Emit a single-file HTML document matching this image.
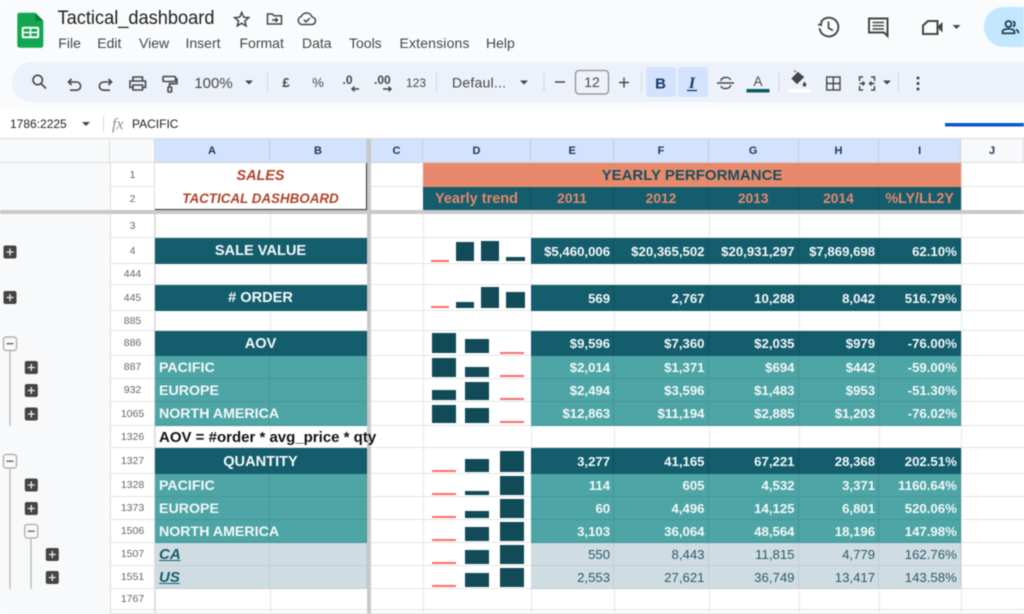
<!DOCTYPE html>
<html lang="en"><head><meta charset="utf-8"><title>Tactical_dashboard</title>
<style>
html,body{margin:0;padding:0;background:#fff}
#p{position:relative;width:1024px;height:614px;overflow:hidden;font-family:"Liberation Sans",sans-serif;background:#fff;filter:blur(.5px)}
#p svg{position:absolute;left:0;top:0;z-index:3}
.tb{background:#f9fbfd;position:absolute;left:0;top:0;width:1024px;height:110px}
.gut{position:absolute;left:0;top:163px;width:109.5px;height:451px;background:#f8f9fa;z-index:1}
.vl{position:absolute;top:139px;height:475px;width:1px;background:#e4e5e5}
.r{position:absolute;left:0;width:1024px;border-bottom:1px solid #e2e3e3;box-sizing:border-box}
.n{position:absolute;left:110px;width:45px;top:0;bottom:0;display:flex;align-items:center;justify-content:center;font-size:10.5px;color:#666;background:#fff;border-left:1px solid #dcdcdc;border-right:1px solid #dcdcdc;box-sizing:border-box}
.c{position:absolute;top:0;bottom:-1px;display:flex;align-items:center;justify-content:flex-end;padding-right:3.2px;box-sizing:border-box;font-size:13.2px;font-weight:bold;color:#f4f8f8;white-space:nowrap}
.ab,.a,.b{justify-content:flex-start;padding:0 0 0 4px;font-size:14.2px}
.ab{left:155px;width:212px;justify-content:center;padding:0;font-size:14.6px}
.a{left:155px;width:115px;z-index:1;padding-top:1px}.b{left:270px;width:97px}
.e{left:531px;width:83.3px}.f{left:614.3px;width:94.4px}.g{left:708.7px;width:90px}.h{left:798.7px;width:80.6px}.i{left:879.3px;width:81.7px}
.dk .c,.dk.c{background:#135d6d;border-right:1px solid #11525f}
.t .c,.t.c{background:#4ea5a6;border-right:1px solid #469698;border-bottom:1px solid #469698}
.l .c,.l.c{background:#cfdde3;border-right:1px solid #bfcfd6;border-bottom:1px solid #bfcfd6;color:#2d5a66;font-weight:normal}
.yr{justify-content:center;padding:0 0 1px 0;font-size:13.8px;color:#e8876b}
.hd{position:absolute;top:139px;height:24px;background:#d3e3fd;border-right:1px solid #c4cfdf;box-sizing:border-box;display:flex;align-items:center;justify-content:center;font-size:11px;font-weight:bold;color:#1c3557;border-bottom:1px solid #d0d0d0}
.bar{position:absolute;background:#114b57}
.red{position:absolute;background:#ff6b6b;height:2px}
.fz{position:absolute;background:#c9c9c9;z-index:2}
.line{position:absolute;background:#dadada}
</style></head><body><div id="p">
<div class="tb"></div>

<div class="vl" style="left:155px"></div><div class="vl" style="left:270px"></div><div class="vl" style="left:423px"></div><div class="vl" style="left:531px"></div><div class="vl" style="left:614px"></div><div class="vl" style="left:709px"></div><div class="vl" style="left:799px"></div><div class="vl" style="left:879px"></div><div class="vl" style="left:961px"></div>

<div class="line" style="left:0;top:138px;width:1024px;height:1px"></div>
<div class="hd" style="left:0;width:110px;background:#f8f9fa;border-color:#dcdcdc"></div>
<div class="hd" style="left:110px;width:45px;background:#f8f9fa;border-color:#dcdcdc"></div>
<div class="hd" style="left:155px;width:115px">A</div>
<div class="hd" style="left:270px;width:97px">B</div>
<div class="hd" style="left:371px;width:52px">C</div>
<div class="hd" style="left:423px;width:108px">D</div>
<div class="hd" style="left:531px;width:83.3px">E</div>
<div class="hd" style="left:614.3px;width:94.4px">F</div>
<div class="hd" style="left:708.7px;width:90px">G</div>
<div class="hd" style="left:798.7px;width:80.6px">H</div>
<div class="hd" style="left:879.3px;width:81.7px">I</div>
<div class="hd" style="left:961px;width:63px;background:#f8f9fa;border-color:#dcdcdc">J</div>

<div class="r" style="top:163px;height:24px"><span class="n">1</span>
<span class="c" style="left:155px;width:211px;background:#fff;justify-content:center;padding:2px 0 0 0;font-style:italic;font-size:14.4px;color:#b0432b">SALES</span>
<span class="c" style="left:423px;width:538px;background:#e8896c;justify-content:center;padding:0;font-size:15px;color:#174f5c">YEARLY PERFORMANCE</span></div>
<div class="r" style="top:187px;height:23px;border:0"><span class="n">2</span>
<span class="c" style="left:155px;width:211px;background:#fff;justify-content:center;padding:0 0 1px 0;font-style:italic;font-size:13.4px;color:#b0432b">TACTICAL DASHBOARD</span>
<span class="c dk yr" style="left:423px;width:108px;font-size:14.5px">Yearly trend</span>
<span class="c e dk yr">2011</span>
<span class="c f dk yr">2012</span>
<span class="c g dk yr">2013</span>
<span class="c h dk yr">2014</span>
<span class="c i dk yr" style="font-size:14.3px">%LY/LL2Y</span></div>
<div style="position:absolute;left:366px;top:163px;width:1px;height:47px;background:#333"></div>
<div style="position:absolute;left:155px;top:209px;width:212px;height:1px;background:#333"></div>

<div class="r" style="top:214px;height:24px"><span class="n">3</span></div>

<div class="r" style="top:238px;height:26px"><span class="n">4</span>
<span class="c ab dk">SALE VALUE</span><span class="c e dk">$5,460,006</span><span class="c f dk">$20,365,502</span><span class="c g dk">$20,931,297</span><span class="c h dk">$7,869,698</span><span class="c i dk">62.10%</span></div>
<div class="r" style="top:264px;height:21px"><span class="n">444</span></div>
<div class="r" style="top:285px;height:26px"><span class="n">445</span>
<span class="c ab dk"># ORDER</span><span class="c e dk">569</span><span class="c f dk">2,767</span><span class="c g dk">10,288</span><span class="c h dk">8,042</span><span class="c i dk">516.79%</span></div>
<div class="r" style="top:311px;height:20px"><span class="n">885</span></div>
<div class="r" style="top:331px;height:25px"><span class="n">886</span>
<span class="c ab dk">AOV</span><span class="c e dk">$9,596</span><span class="c f dk">$7,360</span><span class="c g dk">$2,035</span><span class="c h dk">$979</span><span class="c i dk">-76.00%</span></div>
<div class="r t" style="top:356px;height:23px"><span class="n">887</span>
<span class="c a">PACIFIC</span><span class="c b"></span><span class="c e">$2,014</span><span class="c f">$1,371</span><span class="c g">$694</span><span class="c h">$442</span><span class="c i">-59.00%</span></div>
<div class="r t" style="top:379px;height:23px"><span class="n">932</span>
<span class="c a">EUROPE</span><span class="c b"></span><span class="c e">$2,494</span><span class="c f">$3,596</span><span class="c g">$1,483</span><span class="c h">$953</span><span class="c i">-51.30%</span></div>
<div class="r t" style="top:402px;height:24px"><span class="n">1065</span>
<span class="c a">NORTH AMERICA</span><span class="c b"></span><span class="c e">$12,863</span><span class="c f">$11,194</span><span class="c g">$2,885</span><span class="c h">$1,203</span><span class="c i">-76.02%</span></div>
<div class="r" style="top:426px;height:22px"><span class="n">1326</span></div>
<div class="r" style="top:448px;height:26px"><span class="n">1327</span>
<span class="c ab dk" style="padding-top:2px">QUANTITY</span><span class="c e dk">3,277</span><span class="c f dk">41,165</span><span class="c g dk">67,221</span><span class="c h dk">28,368</span><span class="c i dk">202.51%</span></div>
<div class="r t" style="top:474px;height:23px"><span class="n">1328</span>
<span class="c a">PACIFIC</span><span class="c b"></span><span class="c e">114</span><span class="c f">605</span><span class="c g">4,532</span><span class="c h">3,371</span><span class="c i">1160.64%</span></div>
<div class="r t" style="top:497px;height:23px"><span class="n">1373</span>
<span class="c a">EUROPE</span><span class="c b"></span><span class="c e">60</span><span class="c f">4,496</span><span class="c g">14,125</span><span class="c h">6,801</span><span class="c i">520.06%</span></div>
<div class="r t" style="top:520px;height:23px"><span class="n">1506</span>
<span class="c a">NORTH AMERICA</span><span class="c b"></span><span class="c e">3,103</span><span class="c f">36,064</span><span class="c g">48,564</span><span class="c h">18,196</span><span class="c i">147.98%</span></div>
<div class="r l" style="top:543px;height:23px"><span class="n">1507</span>
<span class="c a" style="font-weight:bold;font-style:italic;font-size:15px;color:#135d6d;text-decoration:underline">CA</span><span class="c b"></span><span class="c e">550</span><span class="c f">8,443</span><span class="c g">11,815</span><span class="c h">4,779</span><span class="c i">162.76%</span></div>
<div class="r l" style="top:566px;height:23px"><span class="n">1551</span>
<span class="c a" style="font-weight:bold;font-style:italic;font-size:15px;color:#135d6d;text-decoration:underline">US</span><span class="c b"></span><span class="c e">2,553</span><span class="c f">27,621</span><span class="c g">36,749</span><span class="c h">13,417</span><span class="c i">143.58%</span></div>
<div class="r" style="top:589px;height:21px"><span class="n">1767</span></div>
<div class="r" style="top:610px;height:4px"><span class="n"></span></div>

<div class="gut"></div>
<div class="fz" style="left:367px;top:139px;width:4px;height:475px"></div>
<div class="fz" style="left:0;top:210px;width:1024px;height:4px"></div>
<div style="position:absolute;z-index:2;left:159px;top:427px;height:22px;line-height:22px;font-size:15px;font-weight:bold;color:#111;white-space:nowrap">AOV = #order * avg_price * qty</div>

<div class="red" style="left:430.5px;top:260px;width:18px"></div><div class="bar" style="left:456px;top:242px;width:18px;height:19px"></div><div class="bar" style="left:481px;top:241px;width:18px;height:20px"></div><div class="bar" style="left:506px;top:257px;width:18.5px;height:4px"></div>
<div class="red" style="left:430.5px;top:306px;width:18px"></div><div class="bar" style="left:456px;top:302px;width:18px;height:5.5px"></div><div class="bar" style="left:481px;top:287px;width:18px;height:20.5px"></div><div class="bar" style="left:506px;top:292px;width:18.5px;height:15.5px"></div>

<div class="bar" style="left:431.5px;top:333px;width:24px;height:20px"></div><div class="bar" style="left:465px;top:339px;width:24px;height:14px"></div><div class="red" style="left:499.5px;top:352px;width:24px"></div>
<div class="bar" style="left:431.5px;top:358px;width:24px;height:19px"></div><div class="bar" style="left:465px;top:367px;width:24px;height:10px"></div><div class="red" style="left:499.5px;top:375px;width:24px"></div>
<div class="bar" style="left:431.5px;top:390px;width:24px;height:10px"></div><div class="bar" style="left:465px;top:382px;width:24px;height:18px"></div><div class="red" style="left:499.5px;top:398px;width:24px"></div>
<div class="bar" style="left:431.5px;top:405px;width:24px;height:18px"></div><div class="bar" style="left:465px;top:408px;width:24px;height:15px"></div><div class="red" style="left:499.5px;top:421px;width:24px"></div>

<div class="red" style="left:431.5px;top:470px;width:24px"></div><div class="bar" style="left:465px;top:459px;width:24px;height:12.5px"></div><div class="bar" style="left:499.5px;top:451px;width:24px;height:20.5px"></div>
<div class="red" style="left:431.5px;top:493px;width:24px"></div><div class="bar" style="left:465px;top:491px;width:24px;height:3.5px"></div><div class="bar" style="left:499.5px;top:476px;width:24px;height:18.5px"></div>
<div class="red" style="left:431.5px;top:516px;width:24px"></div><div class="bar" style="left:465px;top:511px;width:24px;height:6.5px"></div><div class="bar" style="left:499.5px;top:499px;width:24px;height:18.5px"></div>
<div class="red" style="left:431.5px;top:539px;width:24px"></div><div class="bar" style="left:465px;top:527px;width:24px;height:13.5px"></div><div class="bar" style="left:499.5px;top:522px;width:24px;height:18.5px"></div>
<div class="red" style="left:431.5px;top:562px;width:24px"></div><div class="bar" style="left:465px;top:550px;width:24px;height:13.5px"></div><div class="bar" style="left:499.5px;top:545px;width:24px;height:18.5px"></div>
<div class="red" style="left:431.5px;top:585px;width:24px"></div><div class="bar" style="left:465px;top:573px;width:24px;height:13.5px"></div><div class="bar" style="left:499.5px;top:568px;width:24px;height:18.5px"></div>

<svg width="1024" height="614" viewBox="0 0 1024 614" font-family="'Liberation Sans',sans-serif">
<path d="M32 62H1024V102H32a20 20 0 0 1 0-40z" fill="#edf2fa"/>
<rect x="0" y="110" width="1024" height="28" fill="#fff"/>

<path d="M19.5 12.7H35.3L43.3 20.7V45.5a2.2 2.2 0 0 1-2.2 2.2H19.5a2.2 2.2 0 0 1-2.2-2.2V14.9a2.2 2.2 0 0 1 2.2-2.2z" fill="#12a650"/>
<path d="M35.3 12.7L43.3 20.7H35.3z" fill="#0b7f3a"/>
<rect x="22.7" y="27.7" width="15.5" height="9.6" rx="1" fill="none" stroke="#fff" stroke-width="2"/>
<path d="M22.5 32.5H38.5M30.5 27.5V37.5" stroke="#fff" stroke-width="1.6"/>

<text x="57.5" y="24" font-size="19" fill="#1f1f1f" textLength="157" lengthAdjust="spacingAndGlyphs">Tactical_dashboard</text>
<g font-size="14" fill="#444746">
<text x="58.3" y="48">File</text><text x="97.3" y="48">Edit</text><text x="139" y="48">View</text><text x="185.5" y="48">Insert</text><text x="239.5" y="48">Format</text><text x="302" y="48">Data</text><text x="349" y="48">Tools</text><text x="399.5" y="48" textLength="70">Extensions</text><text x="486" y="48">Help</text>
</g>

<g fill="none" stroke="#444746" stroke-width="1.5">
<path d="M241.7 12.5l2 4.7 5.1.4-3.9 3.3 1.2 5-4.4-2.7-4.4 2.7 1.2-5-3.9-3.3 5.1-.4z"/>
<path d="M267.5 14h5l1.5 1.8h7.5v8.2h-14z"/>
<path d="M272 20h5.5M275.5 18l2 2-2 2"/>
<path d="M302 24.5h9.5a3.7 3.7 0 0 0 .6-7.4 5.8 5.8 0 0 0-10.9-.6 4.1 4.1 0 0 0 .8 8z"/>
<path d="M303.8 19.8l2.2 2 3.8-3.6"/>
</g>

<g fill="none" stroke="#444746" stroke-width="1.6">
<circle cx="37.7" cy="80" r="4.7"/><path d="M41 83.5l5 5"/>
<path d="M71.5 79l-3 3 3 3M69 82h7.5a4.1 4.1 0 0 1 0 8.2H70"/>
<path d="M108.5 79l3 3-3 3M111 82h-7.5a4.1 4.1 0 0 0 0 8.2h6.5"/>
<path d="M133 81v-4h9.5v4M133 87.5h-3v-6.5h15.5v6.5h-3M133 85h9.5v5H133z"/>
<rect x="163" y="76.5" width="12.5" height="5" rx="1"/><path d="M175.5 79h1.5v4.7h-7.5V87"/><rect x="168" y="87" width="3.6" height="5" rx=".8"/>
</g>

<g fill="#444746">
<text x="213.5" y="88" font-size="15" text-anchor="middle">100%</text>
<path d="M245 80.5h8l-4 4z"/>
<text x="286" y="87" font-size="13" text-anchor="middle" font-weight="bold">£</text>
<text x="318" y="87" font-size="13" text-anchor="middle">%</text>
<text x="342.5" y="84" font-size="12" font-weight="bold">.0</text>
<text x="374" y="84" font-size="12" font-weight="bold">.00</text>
<text x="416" y="87" font-size="12" text-anchor="middle">123</text>
<text x="452" y="87.5" font-size="14" textLength="54">Defaul...</text>
<path d="M520 80.5h8l-4 4z"/>
<text x="592" y="87" font-size="14" text-anchor="middle">12</text>
<path d="M883 80.5h8l-4 4z"/>
<circle cx="918" cy="78" r="1.5"/><circle cx="918" cy="83.5" r="1.5"/><circle cx="918" cy="89" r="1.5"/>
<path d="M952.5 25h8l-4 4z"/>
</g>
<g fill="none" stroke="#444746" stroke-width="1.4">
<path d="M359 89h-7M354.5 86.7l-2.5 2.3 2.5 2.3"/>
<path d="M383 89h8M388.5 86.7l2.5 2.3-2.5 2.3"/>
<path d="M555 82h10M619 82.5h10M624 77.5v10"/>
</g>
<rect x="575.5" y="70.5" width="33" height="23.5" rx="3.5" fill="none" stroke="#8f8f8f" stroke-width="1.3"/>

<g fill="#d6d9dd">
<rect x="267" y="72" width="1" height="20"/><rect x="436" y="72" width="1" height="20"/><rect x="543.5" y="72" width="1" height="20"/><rect x="641" y="72" width="1" height="20"/><rect x="778.5" y="72" width="1" height="20"/><rect x="898" y="72" width="1" height="20"/>
</g>
<rect x="646" y="67" width="30" height="30" rx="3" fill="#d3e3fd"/>
<rect x="678" y="67" width="30" height="30" rx="3" fill="#d3e3fd"/>
<text x="660.5" y="88.5" font-size="15" font-weight="bold" text-anchor="middle" fill="#173a63">B</text>
<text x="692" y="88" font-family="'Liberation Serif',serif" font-size="16" font-weight="bold" font-style="italic" text-anchor="middle" fill="#173a63">I</text>
<path d="M687 90.5h10" stroke="#173a63" stroke-width="1.3"/>
<g fill="none" stroke="#444746" stroke-width="1.4">
<path d="M717 83h17M721 81c-.5-4 8.5-5 9.5-1M730.5 85c.5 4-8.5 5-9.5 1"/>
<rect x="826.7" y="77" width="13.3" height="13"/><path d="M833.3 77v13M826.7 83.5H840"/>
<path d="M863 77h-3.5v4M863 90h-3.5v-4M871 77h3.5v4M871 90h3.5v-4M859.5 83.5h5M862.5 81.5l2 2-2 2M874.5 83.5h-5M871.5 81.5l-2 2 2 2"/>
</g>
<text x="758" y="86" font-size="13.5" text-anchor="middle" fill="#444746">A</text>
<rect x="746.5" y="89" width="23" height="3.5" fill="#0f5a60"/>
<path d="M798 72.5l-6 6 5 5 6.5-6.5zM796 72l-2-1.500" fill="#444746" stroke="#444746" stroke-width="1"/>
<path d="M804.5 81.5c1 1.5 1.800 2.300 1.800 3.200a1.800 1.800 0 0 1-3.600 0c0-.9.800-1.700 1.800-3.200z" fill="#444746"/>
<rect x="788" y="89" width="23" height="3.5" fill="#fff"/>

<rect x="984" y="7" width="70" height="40" rx="20" fill="#c2e7ff"/>
<g fill="none" stroke="#444746" stroke-width="2">
<path d="M821 22a9.400 9.400 0 1 1-1.400 6.200M818 24.500l3 .5 .5-3.500" stroke-width="1.900"/>
<path d="M828.500 21.500v6.500l4.500 2.500" stroke-width="1.700"/>
<path d="M869 18.500h18.500v17.500l-3.500-3.500H869z"/>
<path d="M872.500 22.500h11.500M872.500 25.700h11.500M872.500 29h11.500" stroke-width="1.400"/>
<path d="M928 21h9.500v13H923v-8.500z"/>
</g>
<path d="M937 27l5.500-5v10.500z" fill="#444746"/>
<g fill="none" stroke="#1f3a4d" stroke-width="1.700">
<circle cx="1008.500" cy="24" r="3"/>
<path d="M1002.500 33.300v-1.500c0-2 3-3 6-3s6 1 6 3v1.500z"/>
<path d="M1013 21.200a3 3 0 0 1 0 5.500M1016 29.500c1.300.6 2.300 1.500 2.300 3v.8"/>
</g>

<text x="10" y="128" font-size="12" fill="#1f1f1f">1786:2225</text>
<path d="M82 122h8l-4 4z" fill="#444746"/>
<rect x="103" y="116" width="1" height="16" fill="#d9d9d9"/>
<text x="112" y="129" font-family="'Liberation Serif',serif" font-style="italic" font-size="16" fill="#8c8c8c">fx</text>
<text x="132" y="128" font-size="12" fill="#1f1f1f">PACIFIC</text>
<rect x="945" y="123" width="79" height="3.5" fill="#0b57d0"/>

<path d="M10 350V426M10 468V589M31 538V589" stroke="#b5b5b5" stroke-width="1.300" fill="none"/>
<g fill="#444">
<rect x="3.5" y="245.500" width="13" height="13" rx="2"/><rect x="3.5" y="291" width="13" height="13" rx="2"/>
<rect x="24.800" y="361" width="13" height="13" rx="2"/><rect x="24.800" y="384" width="13" height="13" rx="2"/><rect x="24.800" y="407.500" width="13" height="13" rx="2"/>
<rect x="24.800" y="478.500" width="13" height="13" rx="2"/><rect x="24.800" y="502" width="13" height="13" rx="2"/>
<rect x="45.800" y="548" width="13" height="13" rx="2"/><rect x="45.800" y="571" width="13" height="13" rx="2"/>
</g>
<path d="M6.500 252h7M10 248.500v7M6.500 297.500h7M10 294v7M27.800 367.500h7M31.300 364v7M27.800 390.500h7M31.300 387v7M27.800 414h7M31.300 410.500v7M27.800 485h7M31.300 481.500v7M27.800 508.500h7M31.300 505v7M48.800 554.500h7M52.300 551v7M48.800 577.500h7M52.300 574v7" stroke="#eee" stroke-width="1.300" fill="none"/>
<g fill="#f8f9fa" stroke="#a8a8a8" stroke-width="1.200">
<rect x="3.500" y="337" width="13" height="13.500" rx="2.500"/><rect x="3.500" y="454.500" width="13" height="13.500" rx="2.500"/><rect x="24.800" y="524.500" width="13" height="13.500" rx="2.500"/>
</g>
<path d="M6.500 343.700h7M6.500 461.200h7M27.800 531.200h7" stroke="#666" stroke-width="1.300"/>
</svg>
</div></body></html>
